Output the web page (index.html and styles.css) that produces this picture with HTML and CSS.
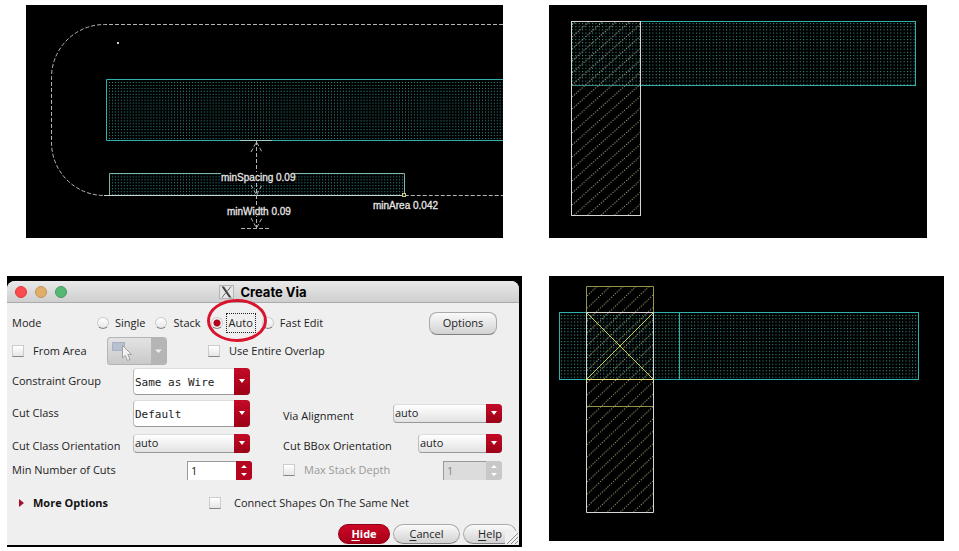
FILE: index.html
```html
<!DOCTYPE html>
<html lang="en">
<head>
<meta charset="utf-8">
<title>Create Via</title>
<link rel="stylesheet" href="styles.css">
</head>
<body>
<main class="sheet">
  <figure class="canvas canvas-spacing">
    <svg viewBox="26 5 477 233" role="img" aria-label="Wire spacing rules">
      <defs>
        <pattern id="dots-a" x="109" y="82" width="2.96" height="2.95" patternUnits="userSpaceOnUse"><rect width="1" height="1" fill="#2f8f90"/></pattern>
      </defs>
      <path class="dash" d="M503 24.500H104.500A53 53 0 0 0 51.500 77.500V142A53 53 0 0 0 104.500 195.500H503"/>
      <rect x="117" y="42" width="2" height="2" fill="#ccc"/>
      <rect x="107" y="80" width="400" height="60" fill="url(#dots-a)"/>
      <path class="teal" d="M504 79.500H106.500V140.500H504"/>
      <rect x="110" y="174" width="294" height="21" fill="url(#dots-a)"/>
      <path class="pale" d="M109.500 195V173.500H404.500V195"/>
      <path d="M104 195.500H404" stroke="#c9d6d2"/>
      <path d="M240 140.500H272" stroke="#a5cfc8"/>
      <path class="dash" d="M256.500 141V228M241 228.500H271"/>
      <path class="dash" d="M251 152L256.500 142L262 152M251 185L256.500 195L262 185M251 218L256.500 228L262 218"/>
      <rect x="221" y="172" width="73" height="11" fill="#000"/>
      <rect x="227" y="205" width="62" height="11" fill="#000"/>
      <rect x="402.500" y="193.500" width="3" height="3" stroke="#cfcf84" fill="#222"/>
      <text x="221" y="181">minSpacing 0.09</text>
      <text x="227" y="215">minWidth 0.09</text>
      <text x="373" y="209">minArea 0.042</text>
    </svg>
  </figure>

  <figure class="canvas canvas-corner">
    <svg viewBox="549 5 378 233" role="img" aria-label="Overlapping wires">
      <defs>
        <pattern id="dots-b" x="572" y="23" width="3.350" height="3.200" patternUnits="userSpaceOnUse"><rect width="1" height="1" fill="#3fa39f"/></pattern>
        <pattern id="hatch-b" x="572" y="25" width="13.500" height="12" patternUnits="userSpaceOnUse"><path d="M0 12L13.500 0" stroke="#96967a" stroke-dasharray="1.300 1.280" fill="none"/></pattern>
      </defs>
      <rect x="572" y="22" width="343" height="63" fill="url(#dots-b)"/>
      <rect class="teal" x="571.500" y="21.500" width="344" height="64"/>
      <rect x="572" y="22" width="68" height="193" fill="url(#hatch-b)"/>
      <rect class="white" x="571.500" y="21.500" width="69" height="194"/>
      <path d="M572 85.500H640" stroke="#3f8a80"/>
    </svg>
  </figure>

  <section class="screen" aria-label="Create Via window">
    <form class="dialog">
      <header class="titlebar">
        <span class="lights"><i class="light red"></i><i class="light amber"></i><i class="light green"></i></span>
        <h1>
          <svg class="xlogo" viewBox="0 0 15 14" aria-hidden="true"><rect x=".5" y=".5" width="14" height="13" fill="#e6e6e6" stroke="#b4b4b4"/><path d="M2.500 1.500H5L12.500 12.500H10Z" fill="#444"/><path d="M12 1.500L8.500 6M6.500 8L3 12.500" stroke="#666" fill="none"/></svg>
          Create Via
        </h1>
      </header>

      <div class="body">
        <div class="row mode">
          <span class="caption">Mode</span>
          <label class="choice"><input type="radio" name="mode"><span>Single</span></label>
          <label class="choice"><input type="radio" name="mode"><span>Stack</span></label>
          <label class="choice auto"><input type="radio" name="mode" checked><span>Auto</span>
            <svg class="ring" viewBox="0 0 60 43" aria-hidden="true"><ellipse cx="30" cy="21.500" rx="28.500" ry="20" fill="none" stroke="#d9142f" stroke-width="3"/></svg>
          </label>
          <label class="choice"><input type="radio" name="mode"><span>Fast Edit</span></label>
          <button type="button" class="push options">Options</button>
        </div>

        <div class="row area">
          <label class="check"><input type="checkbox"><span>From Area</span></label>
          <button type="button" class="picker" aria-label="Pick area" disabled>
            <svg viewBox="0 0 60 28" aria-hidden="true">
              <path d="M44 1H56Q59 1 59 4V24Q59 27 56 27H44Z" fill="#b5b5b5"/>
              <rect x="5.500" y="5.500" width="12" height="8" fill="#b7c0d0" stroke="#a9b1c1"/>
              <path d="M15.500 8.500V21L18.300 18.400L20.500 23.500L23 22.400L20.800 17.500H24.500Z" fill="#f2f2f2" stroke="#a2a2a2"/>
              <path d="M48 12.500H55L51.500 16Z" fill="#eee"/>
            </svg>
          </button>
          <label class="check overlap"><input type="checkbox"><span>Use Entire Overlap</span></label>
        </div>

        <div class="row tall">
          <div class="cell"><label for="cg">Constraint Group</label>
            <span class="combo mono wide"><select id="cg"><option>Same as Wire</option></select></span></div>
        </div>

        <div class="row tall">
          <div class="cell"><label for="cc">Cut Class</label>
            <span class="combo mono wide"><select id="cc"><option>Default</option></select></span></div>
          <div class="cell right"><label class="low" for="va">Via Alignment</label>
            <span class="combo medium"><select id="va"><option>auto</option></select></span></div>
        </div>

        <div class="row">
          <div class="cell"><label class="low" for="co">Cut Class Orientation</label>
            <span class="combo wide"><select id="co"><option>auto</option></select></span></div>
          <div class="cell right"><label class="low" for="bo">Cut BBox Orientation</label>
            <span class="combo narrow"><select id="bo"><option>auto</option></select></span></div>
        </div>

        <div class="row short">
          <div class="cell"><label for="mn">Min Number of Cuts</label>
            <span class="spin"><input id="mn" type="text" inputmode="numeric" value="1"><svg viewBox="0 0 16 19" aria-hidden="true"><path d="M5 7L8 4L11 7ZM5 12L8 15L11 12Z"/></svg></span></div>
          <div class="cell right off"><label class="check"><input type="checkbox" disabled><span>Max Stack Depth</span></label>
            <span class="spin"><input type="text" value="1" aria-label="Max stack depth" disabled><svg viewBox="0 0 16 19" aria-hidden="true"><path d="M5 7L8 4L11 7ZM5 12L8 15L11 12Z"/></svg></span></div>
        </div>

        <div class="row more">
          <button type="button" class="expander"><svg viewBox="0 0 5 8" aria-hidden="true"><path d="M0 0L5 4L0 8Z" fill="#a3122a"/></svg>More Options</button>
          <label class="check connect"><input type="checkbox"><span>Connect Shapes On The Same Net</span></label>
        </div>
      </div>

      <footer class="actions">
        <button type="button" class="push primary"><u>H</u>ide</button>
        <button type="button" class="push cancel"><u>C</u>ancel</button>
        <button type="button" class="push help"><u>H</u>elp</button>
        <svg class="grip" viewBox="0 0 14 14" aria-hidden="true"><rect width="14" height="14" fill="#efefef"/><path d="M2 13L13 2M6 13L13 6M10 13L13 10" stroke="#8d8d8d" fill="none"/></svg>
      </footer>
    </form>
  </section>

  <figure class="canvas canvas-via">
    <svg viewBox="549 276 395 265" role="img" aria-label="Via placed on the overlap">
      <defs>
        <pattern id="dots-c" x="561" y="315" width="3.250" height="3.250" patternUnits="userSpaceOnUse"><rect width="1" height="1" fill="#3fa39f"/></pattern>
        <pattern id="hatch-c" x="587" y="296" width="13" height="12.400" patternUnits="userSpaceOnUse"><path d="M0 12.400L13 0" stroke="#96966c" stroke-dasharray="1.300 1.266" fill="none"/></pattern>
      </defs>
      <rect x="560" y="313" width="358" height="66" fill="url(#dots-c)"/>
      <rect class="teal" x="559.500" y="312.500" width="359" height="67"/>
      <path class="teal" d="M679.500 313V379"/>
      <rect x="587" y="287" width="66" height="225" fill="url(#hatch-c)"/>
      <path class="white" d="M586.500 312.500H653.500V512.500H586.500Z"/>
      <path class="yellow" d="M586.500 312V286.500H653.500V312M587 406.500H653"/>
      <path d="M587 313L653 379M653 313L587 379" stroke="#d0c850" fill="none"/>
      <path d="M586 379.500H654" stroke="#f0e27a"/>
    </svg>
  </figure>
</main>
</body>
</html>
```
FILE: styles.css
```css
* { box-sizing: border-box; }

body {
  margin: 0;
  background: #fff;
  color: #222;
  font: 11px/16px "Open Sans", "Noto Sans", sans-serif;
}

.sheet {
  display: grid;
  grid-template-columns: 515fr 395fr;
  gap: 38px 27px;
  align-items: start;
  padding: 5px 15px 4px 7px;
}

/* Layout canvases */
.canvas { margin: 0; background: #000; }
.canvas svg { display: block; width: 100%; height: auto; }
.canvas-spacing { margin: 0 19px; }
.canvas-corner { margin-right: 17px; }
.canvas text {
  font: 10px "Liberation Sans", sans-serif;
  fill: #e6e6e6;
  stroke: #e6e6e6;
  stroke-width: 0.3px;
}
.dash { fill: none; stroke: #b4b4b4; stroke-dasharray: 4 2; }
.teal { fill: none; stroke: #2fb0ac; }
.pale { fill: none; stroke: #7fb5b0; }
.white { fill: none; stroke: #d6d6d6; }
.yellow { fill: none; stroke: #98934a; }

/* Dialog window */
.screen {
  padding: 5px 3px 2px 0;
  background: #000;
}
.dialog {
  background: #efefef;
  border-radius: 8px 8px 0 0;
}
.titlebar {
  display: grid;
  grid-template-columns: 1fr auto 1fr;
  align-items: center;
  height: 22px;
  padding: 0 8px;
  border-bottom: 1px solid #aaa;
  border-radius: 8px 8px 0 0;
  background: linear-gradient(#e9e9e9, #cfcfcf);
}
.titlebar h1 {
  display: flex;
  align-items: center;
  gap: 6px;
  margin: 0;
  color: #000;
  font: bold 13px/20px Inter, sans-serif;
}
.xlogo { width: 15px; height: 14px; }
.lights { display: flex; gap: 8px; }
.light { width: 12px; height: 12px; border: 1px solid; border-radius: 50%; }
.red { background: #fc4b4f; border-color: #d93c40; }
.amber { background: #dfae68; border-color: #bf9458; }
.green { background: #56b873; border-color: #469c60; }

.body { padding: 6px 17px 0 5px; }
.row {
  display: grid;
  grid-template-columns: minmax(0, 271fr) minmax(0, 219fr);
  align-items: center;
  height: 28px;
}
.row.tall { height: 32px; }
.row.short { height: 26px; }
.cell { display: flex; align-items: center; }
.cell > label:first-child { width: 121px; flex: none; }
.cell.right { justify-content: space-between; }
.cell.right > label:first-child { width: auto; }
.cell .low { padding-top: 6px; }

/* Ticks and radios */
.choice, .check { display: flex; align-items: center; }
input[type="radio"], input[type="checkbox"] {
  appearance: none;
  flex: none;
  width: 12px;
  height: 12px;
  margin: 0;
  border: 1px solid #ccc;
  border-bottom-color: #858585;
  background: linear-gradient(#fff, #e6e6e6);
}
input[type="radio"] { border-radius: 50%; }
input[type="radio"]:checked {
  background: radial-gradient(circle, #b3001b 3px, #f4f4f4 4px);
}
.check input { margin-right: 9px; }

.row.mode { display: flex; }
.caption { width: 85px; }
.choice input { margin-right: 6px; }
.choice { margin-right: 10px; }
.choice.auto { position: relative; margin-right: 6px; }
.choice.auto input { margin-right: 3px; }
.choice.auto span { padding: 1px 2px; border: 1px dotted #222; }
.ring {
  position: absolute;
  top: -14px;
  left: -4px;
  width: 60px;
  height: 43px;
}

.row.area { display: flex; }
.row.area .check:first-child { width: 95px; }
.row.area .overlap { margin-left: 41px; }
.picker {
  width: 60px;
  height: 28px;
  padding: 0;
  border: 0;
  border-radius: 4px;
  background: linear-gradient(#e4e4e4, #c8c8c8);
  box-shadow: inset 0 0 0 1px #b4b4b4;
}
.picker svg { display: block; width: 60px; height: 28px; }

/* Drop-downs */
.combo { position: relative; display: block; height: 19px; }
.combo select {
  appearance: none;
  display: block;
  width: 100%;
  height: 100%;
  margin: 0;
  padding: 0 18px 0 1px;
  border: 1px solid #aaa;
  border-color: #ddd #aaa #999 #bbb;
  border-radius: 4px;
  background: linear-gradient(#fff, #e2e2e2);
  color: #222;
  font: inherit;
}
.combo::before, .combo::after {
  content: "";
  position: absolute;
  pointer-events: none;
}
.combo::before {
  inset: 0 0 0 auto;
  width: 16px;
  border-radius: 0 4px 4px 0;
  background: linear-gradient(#c40a26, #9c0018);
}
.combo::after {
  top: 50%;
  right: 5px;
  margin-top: -2px;
  border: solid transparent;
  border-width: 4px 3px 0;
  border-top-color: #fff;
}
.combo.mono { height: 27px; }
.combo.mono select {
  padding-top: 3px;
  background: #fff;
  font-family: "DejaVu Sans Mono", monospace;
}
.wide { width: 117px; }
.medium { width: 109px; }
.narrow { width: 84px; }

/* Number boxes */
.spin { display: flex; width: 65px; height: 19px; margin-left: 54px; }
.spin input {
  flex: 1;
  min-width: 0;
  padding: 0 3px;
  border: 1px solid #999;
  border-width: 1px 0 0 1px;
  background: #fff;
  color: #222;
  font: inherit;
}
.spin svg {
  width: 16px;
  height: 19px;
  border-radius: 0 3px 3px 0;
  background: #b4041f;
  fill: #fff;
}
.off { color: #999; }
.off .spin { width: 59px; margin-left: 0; }
.off .spin input { background: #dcdcdc; color: #888; }
.off .spin svg { background: #c8c8c8; }

/* Expander row */
.row.more { height: 40px; grid-template-columns: 197fr 293fr; }
.expander {
  display: flex;
  align-items: center;
  gap: 9px;
  padding: 0 7px;
  border: 0;
  background: none;
  color: #111;
  font: inherit;
  font-weight: bold;
}
.expander svg { width: 5px; height: 8px; }
.connect input { margin-right: 13px; }

/* Buttons */
.push {
  height: 20px;
  padding: 0;
  border: 1px solid #aaa;
  border-bottom-color: #808080;
  border-radius: 10px;
  background: linear-gradient(#fafafa, #d2d2d2);
  color: #222;
  font: inherit;
}
.push.options { width: 68px; height: 23px; margin: 0 5px 0 auto; border-radius: 8px; }
.push.primary {
  width: 52px;
  border-color: #8d0016;
  background: linear-gradient(#cc0824, #a8001a);
  color: #fff;
  font-weight: bold;
}
.push.cancel { width: 67px; }
.push.help { width: 54px; }
.push u { text-underline-offset: 2px; }
.actions {
  position: relative;
  display: flex;
  justify-content: flex-end;
  gap: 3px;
  padding: 1px 2px 1px 0;
}
.grip {
  position: absolute;
  right: 0;
  bottom: 0;
  width: 14px;
  height: 14px;
}
```
